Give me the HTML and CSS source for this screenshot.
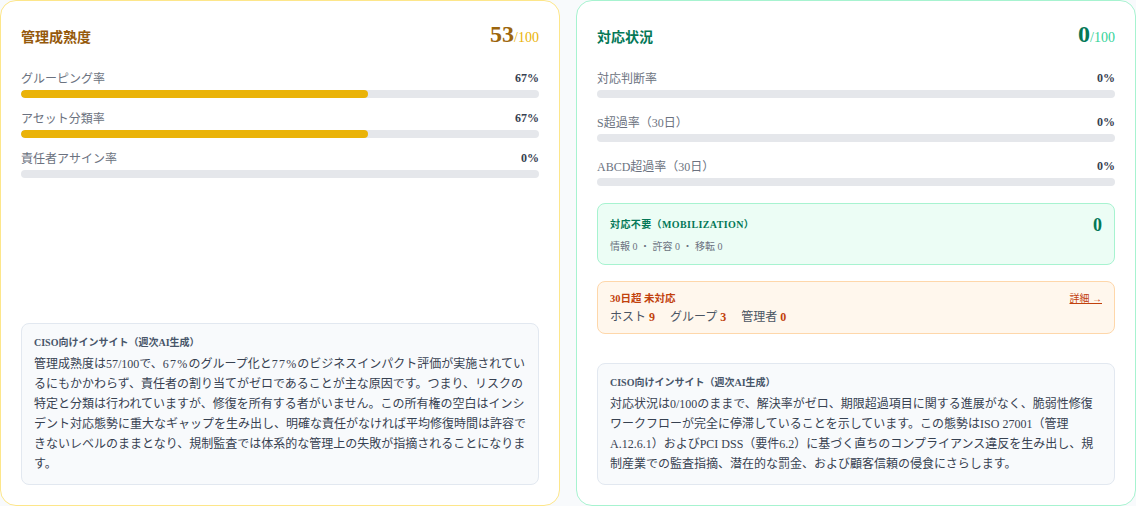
FILE: index.html
```html
<!DOCTYPE html>
<html lang="ja">

<head>
    <meta charset="UTF-8">
    <meta name="viewport" content="width=device-width, initial-scale=1.0">
    <title>Security Posture</title>
    <link rel="stylesheet" href="styles.css">
</head>

<body>
    <div class="cards">
        <!-- Management maturity -->
        <section class="card card-maturity">
            <div class="card-head">
                <h2 class="card-title">管理成熟度</h2>
                <div class="score"><span class="score-num">53</span><span class="score-max">/100</span></div>
            </div>

            <div class="rows">
                <div class="row">
                    <div class="row-top"><span class="row-label">グルーピング率</span><span class="row-val">67%</span></div>
                    <div class="bar"><div class="bar-fill" style="width: 67%"></div></div>
                </div>
                <div class="row">
                    <div class="row-top"><span class="row-label">アセット分類率</span><span class="row-val">67%</span></div>
                    <div class="bar"><div class="bar-fill" style="width: 67%"></div></div>
                </div>
                <div class="row">
                    <div class="row-top"><span class="row-label">責任者アサイン率</span><span class="row-val">0%</span></div>
                    <div class="bar"><div class="bar-fill" style="width: 0%"></div></div>
                </div>
            </div>

            <div class="insight">
                <div class="insight-title">CISO向けインサイト（週次AI生成）</div>
                <p class="insight-text">管理成熟度は57/100で、<span class="pct">67%</span>のグループ化と<span class="pct">77%</span>のビジネスインパクト評価が実施されているにもかかわらず、責任者の割り当てがゼロであることが主な原因です。つまり、リスクの特定と分類は行われていますが、修復を所有する者がいません。この所有権の空白はインシデント対応態勢に重大なギャップを生み出し、明確な責任がなければ平均修復時間は許容できないレベルのままとなり、規制監査では体系的な管理上の失敗が指摘されることになります。</p>
            </div>
        </section>

        <!-- Response status -->
        <section class="card card-response">
            <div class="card-head">
                <h2 class="card-title">対応状況</h2>
                <div class="score"><span class="score-num">0</span><span class="score-max">/100</span></div>
            </div>

            <div class="rows">
                <div class="row">
                    <div class="row-top"><span class="row-label">対応判断率</span><span class="row-val">0%</span></div>
                    <div class="bar"><div class="bar-fill" style="width: 0%"></div></div>
                </div>
                <div class="row">
                    <div class="row-top"><span class="row-label">S超過率（30日）</span><span class="row-val">0%</span></div>
                    <div class="bar"><div class="bar-fill" style="width: 0%"></div></div>
                </div>
                <div class="row">
                    <div class="row-top"><span class="row-label">ABCD超過率（30日）</span><span class="row-val">0%</span></div>
                    <div class="bar"><div class="bar-fill" style="width: 0%"></div></div>
                </div>
            </div>

            <div class="mob-box">
                <div class="mob-head">
                    <span class="mob-title">対応不要（MOBILIZATION）</span>
                    <span class="mob-count">0</span>
                </div>
                <div class="mob-sub">情報 0 ・ 許容 0 ・ 移転 0</div>
            </div>

            <div class="overdue-box">
                <div class="overdue-head">
                    <span class="overdue-title">30日超 未対応</span>
                    <a class="overdue-link" href="#">詳細 →</a>
                </div>
                <div class="overdue-items">
                    <span>ホスト <b>9</b></span>
                    <span>グループ <b>3</b></span>
                    <span>管理者 <b>0</b></span>
                </div>
            </div>

            <div class="insight">
                <div class="insight-title">CISO向けインサイト（週次AI生成）</div>
                <p class="insight-text">対応状況は0/100のままで、解決率がゼロ、期限超過項目に関する進展がなく、脆弱性修復ワークフローが完全に停滞していることを示しています。この態勢はISO 27001（管理A.12.6.1）およびPCI DSS（要件6.2）に基づく直ちのコンプライアンス違反を生み出し、規制産業での監査指摘、潜在的な罰金、および顧客信頼の侵食にさらします。</p>
            </div>
        </section>
    </div>
</body>

</html>
```

FILE: styles.css
```css
body {
    margin: 0;
    padding: 0;
    background: #f8fafc;
    font-family: "Liberation Serif", "Noto Sans CJK JP", serif;
    color: #374151;
}

.cards {
    display: grid;
    grid-template-columns: 560px 560px;
    gap: 16px;
}
/* Card */

.card {
    display: flex;
    flex-direction: column;
    box-sizing: border-box;
    height: 506px;
    padding: 20px;
    background: #fff;
    border: 1px solid #e5e7eb;
    border-radius: 16px;
}

.card-maturity {
    border-color: #fde68a;
}

.card-response {
    border-color: #a7f3d0;
}

.card-head {
    display: flex;
    justify-content: space-between;
    align-items: center;
    height: 30px;
    margin-bottom: 18px;
}

.card-title {
    margin: 0;
    font-size: 14px;
    font-weight: bold;
}

.card-maturity .card-title {
    color: #95590b;
}

.card-response .card-title {
    color: #047857;
}

.score {
    line-height: 30px;
}

.score-num {
    font-size: 24px;
    font-weight: bold;
}

.score-max {
    font-size: 14px;
}

.card-maturity .score-num {
    color: #9c650c;
}

.card-maturity .score-max {
    color: #eab308;
}

.card-response .score-num {
    color: #047857;
}

.card-response .score-max {
    color: #34d399;
}
/* Rows */

.rows {
    display: flex;
    flex-direction: column;
    gap: 11px;
}

.card-response .rows {
    gap: 15px;
}

.row-top {
    display: flex;
    justify-content: space-between;
    align-items: center;
    height: 18px;
    margin-bottom: 3px;
}

.row-label {
    font-size: 12px;
    color: #6b7280;
}

.row-val {
    font-size: 12px;
    font-weight: bold;
    color: #374151;
}

.bar {
    height: 8px;
    background: #e5e7eb;
    border-radius: 4px;
    overflow: hidden;
}

.bar-fill {
    height: 100%;
    background: #eab308;
    border-radius: 4px;
}
/* Mobilization box */

.mob-box {
    margin-top: 17px;
    padding: 12px 12px 10px;
    background: #ecfdf5;
    border: 1px solid #a7f3d0;
    border-radius: 8px;
}

.mob-head {
    display: flex;
    justify-content: space-between;
    align-items: center;
    height: 14px;
}

.mob-title {
    font-size: 10px;
    font-weight: bold;
    letter-spacing: 0.4px;
    color: #047857;
}

.mob-count {
    font-size: 18px;
    font-weight: bold;
    color: #047857;
    line-height: 14px;
    padding-top: 3px;
}

.mob-sub {
    margin-top: 10px;
    font-size: 10px;
    line-height: 14px;
    color: #6b7280;
}
/* Overdue box */

.overdue-box {
    margin-top: 16px;
    padding: 8px 12px 7px;
    background: #fff7ed;
    border: 1px solid #fed7aa;
    border-radius: 8px;
}

.overdue-head {
    display: flex;
    justify-content: space-between;
    align-items: center;
    height: 14px;
}

.overdue-title {
    font-size: 10.5px;
    font-weight: bold;
    color: #c2410c;
}

.overdue-link {
    font-size: 10px;
    color: #c2410c;
}

.overdue-items {
    display: flex;
    gap: 15px;
    margin-top: 4px;
    font-size: 12px;
    line-height: 18px;
    color: #4b5563;
}

.overdue-items b {
    color: #c2410c;
}
/* Insight */

.insight {
    margin-top: auto;
    padding: 12px 12px 10px;
    background: #f8fafc;
    border: 1px solid #e2e8f0;
    border-radius: 8px;
}

.insight-title {
    font-size: 10px;
    font-weight: bold;
    line-height: 14px;
    color: #475569;
}

.insight-text {
    margin: 4px 0 0;
    font-size: 12px;
    line-height: 20px;
    color: #374151;
}

.pct {
    letter-spacing: 1.2px;
}
```
